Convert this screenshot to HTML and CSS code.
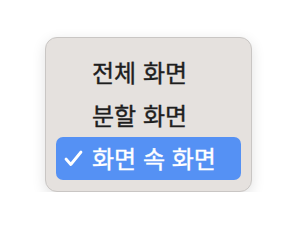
FILE: index.html
```html
<!DOCTYPE html>
<html lang="ko">
<head>
    <meta charset="UTF-8">
    <meta name="viewport" content="width=device-width, initial-scale=1.0">
    <title>화면 메뉴</title>
    <link rel="stylesheet" href="styles.css">
</head>
<body>
    <div class="menu">
        <div class="menu-item">
            <span class="check"></span>
            <span class="label">전체 화면</span>
        </div>
        <div class="menu-item">
            <span class="check"></span>
            <span class="label">분할 화면</span>
        </div>
        <div class="menu-item selected">
            <span class="check">
                <svg width="19" height="17" viewBox="0 0 19 17">
                    <path d="M2 9 L6.8 14.5 L17 2" fill="none" stroke="#fff" stroke-width="2.8" stroke-linecap="round" stroke-linejoin="round"/>
                </svg>
            </span>
            <span class="label">화면 속 화면</span>
        </div>
    </div>
</body>
</html>
```

FILE: styles.css
```css
body {
    margin: 0;
    padding: 0;
    background-color: #ffffff;
    font-family: "Noto Sans CJK KR", "Noto Sans", sans-serif;
}

.menu {
    width: 207px;
    margin: 37px 0 0 45px;
    padding: 13px 10px 11px 10px;
    box-sizing: border-box;
    background-color: #e5e1de;
    border: 1px solid #c9c6c4;
    border-radius: 12px;
    box-shadow: 0 4px 14px rgba(0, 0, 0, 0.12);
}

.menu-item {
    display: flex;
    align-items: center;
    height: 43px;
    padding-left: 8px;
    border-radius: 7px;
    color: #1e1e1e;
    font-size: 24px;
    font-weight: 400;
    -webkit-text-stroke: 0.4px currentColor;
}

.check {
    width: 28px;
    display: flex;
    align-items: center;
}

.label {
    line-height: 1;
    margin-top: -2px;
}

.selected {
    background-color: #5591f4;
    color: #ffffff;
}
```
